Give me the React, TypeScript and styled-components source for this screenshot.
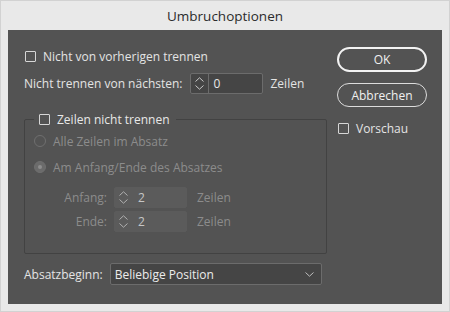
import styled, { createGlobalStyle } from 'styled-components';

const GlobalStyle = createGlobalStyle`
  html, body {
    margin: 0;
    padding: 0;
    background: #e9e9e9;
  }
  * {
    box-sizing: border-box;
  }
`;

const Window = styled.div`
  width: 450px;
  height: 312px;
  background: #e9e9e9;
  border: 1px solid #d2d2d2;
  display: flex;
  flex-direction: column;
  font-family: 'Open Sans', 'Noto Sans', sans-serif;
  font-size: 12px;
`;

const TitleBar = styled.div`
  height: 29px;
  display: flex;
  align-items: center;
  justify-content: center;
  color: #2b2b2b;
  font-size: 13.5px;
  padding-top: 1px;
`;

const Panel = styled.div`
  flex: 1;
  margin: 0 7px 7px 7px;
  background: #535353;
  display: flex;
  gap: 10px;
  padding: 16px 0 0 16px;
  color: #e4e4e4;
`;

const LeftColumn = styled.div`
  width: 303px;
  display: flex;
  flex-direction: column;
`;

const RightColumn = styled.div`
  width: 90px;
  display: flex;
  flex-direction: column;
  gap: 11px;
  padding-top: 1px;
`;

const Row = styled.div<{ $mt?: number; $disabled?: boolean }>`
  display: flex;
  align-items: center;
  height: 20px;
  gap: 7px;
  margin-top: ${({ $mt }) => $mt ?? 0}px;
  color: ${({ $disabled }) => ($disabled ? '#8c8c8c' : '#e4e4e4')};
  white-space: nowrap;
`;

const SpinRow = styled(Row)`
  height: 22px;
`;

const Box = styled.span`
  width: 11px;
  height: 11px;
  border: 1px solid #d6d6d6;
  border-radius: 1px;
  flex-shrink: 0;
  margin-left: 1px;
`;

const Radio = styled.span<{ $checked?: boolean }>`
  width: 12px;
  height: 12px;
  border-radius: 50%;
  flex-shrink: 0;
  border: 1px solid #6f6f6f;
  background: ${({ $checked }) => ($checked ? '#6b6b6b' : 'transparent')};
  display: flex;
  align-items: center;
  justify-content: center;
  &::after {
    content: '';
    display: ${({ $checked }) => ($checked ? 'block' : 'none')};
    width: 4px;
    height: 4px;
    border-radius: 50%;
    background: #8e8e8e;
  }
`;

const Spinner = styled.div<{ $disabled?: boolean }>`
  width: 73px;
  height: 21px;
  flex-shrink: 0;
  display: flex;
  border-radius: 2px;
  border: 1px solid ${({ $disabled }) => ($disabled ? '#5b5b5b' : '#6c6c6c')};
  background: ${({ $disabled }) => ($disabled ? '#5b5b5b' : '#454545')};
  color: ${({ $disabled }) => ($disabled ? '#c6c6c6' : '#e8e8e8')};
`;

const SpinArrows = styled.div<{ $disabled?: boolean }>`
  width: 18px;
  display: flex;
  align-items: center;
  justify-content: center;
  border-right: 1px solid ${({ $disabled }) => ($disabled ? '#5b5b5b' : '#6c6c6c')};
`;

const SpinValue = styled.div`
  flex: 1;
  display: flex;
  align-items: center;
  padding-left: 5px;
`;

const Unit = styled.span`
  margin-left: 1px;
`;

const Group = styled.fieldset`
  margin: 17px 0 0 0;
  padding: 0 9px 21px 9px;
  border: 1px solid #424242;
  border-radius: 2px;
  display: flex;
  flex-direction: column;
`;

const Legend = styled.legend`
  padding: 0 6px 0 4px;
  display: flex;
  align-items: center;
  gap: 7px;
  height: 16px;
  color: #e8e8e8;
`;

const FieldGrid = styled.div`
  display: grid;
  grid-template-columns: 73px 73px auto;
  column-gap: 7px;
  row-gap: 3px;
  align-items: center;
  margin-top: 10px;
  color: #8c8c8c;
`;

const FieldLabel = styled.span`
  text-align: right;
`;

const FieldUnit = styled.span`
  margin-left: 3px;
`;

const Select = styled.div`
  width: 212px;
  height: 22px;
  flex-shrink: 0;
  border: 1px solid #6c6c6c;
  border-radius: 2px;
  background: #454545;
  display: flex;
  align-items: center;
  justify-content: space-between;
  padding: 0 7px 0 4px;
  color: #ececec;
`;

const Button = styled.div<{ $primary?: boolean }>`
  width: 90px;
  height: ${({ $primary }) => ($primary ? 25 : 24)}px;
  border-radius: 13px;
  border: ${({ $primary }) => ($primary ? '2px solid #f2f2f2' : '1px solid #dcdcdc')};
  display: flex;
  align-items: center;
  justify-content: center;
  color: #f0f0f0;
`;

const Caret = ({ up, color }: { up?: boolean; color: string }) => (
  <svg width="9" height="5" viewBox="0 0 9 5">
    <path
      d={up ? 'M0.5 4.5 L4.5 0.8 L8.5 4.5' : 'M0.5 0.5 L4.5 4.2 L8.5 0.5'}
      fill="none"
      stroke={color}
      strokeWidth="1"
    />
  </svg>
);

const ArrowStack = styled.div`
  display: flex;
  flex-direction: column;
  gap: 3px;
`;

const SpinBox = ({ value, disabled }: { value: string; disabled?: boolean }) => {
  const c = disabled ? '#b0b0b0' : '#c8c8c8';
  return (
    <Spinner $disabled={disabled}>
      <SpinArrows $disabled={disabled}>
        <ArrowStack>
          <Caret up color={c} />
          <Caret color={c} />
        </ArrowStack>
      </SpinArrows>
      <SpinValue>{value}</SpinValue>
    </Spinner>
  );
};

const App = () => {
  return (
    <>
      <GlobalStyle />
      <Window>
        <TitleBar>Umbruchoptionen</TitleBar>
        <Panel>
          <LeftColumn>
            <Row>
              <Box />
              Nicht von vorherigen trennen
            </Row>
            <SpinRow $mt={6}>
              Nicht trennen von nächsten:
              <SpinBox value="0" />
              <Unit>Zeilen</Unit>
            </SpinRow>
            <Group>
              <Legend>
                <Box />
                Zeilen nicht trennen
              </Legend>
              <Row $mt={4} $disabled>
                <Radio />
                Alle Zeilen im Absatz
              </Row>
              <Row $mt={6} $disabled>
                <Radio $checked />
                Am Anfang/Ende des Absatzes
              </Row>
              <FieldGrid>
                <FieldLabel>Anfang:</FieldLabel>
                <SpinBox value="2" disabled />
                <FieldUnit>Zeilen</FieldUnit>
                <FieldLabel>Ende:</FieldLabel>
                <SpinBox value="2" disabled />
                <FieldUnit>Zeilen</FieldUnit>
              </FieldGrid>
            </Group>
            <SpinRow $mt={9}>
              Absatzbeginn:
              <Select>
                Beliebige Position
                <Caret color="#bdbdbd" />
              </Select>
            </SpinRow>
          </LeftColumn>
          <RightColumn>
            <Button $primary>OK</Button>
            <Button>Abbrechen</Button>
            <Row>
              <Box />
              Vorschau
            </Row>
          </RightColumn>
        </Panel>
      </Window>
    </>
  );
};

export default App;
